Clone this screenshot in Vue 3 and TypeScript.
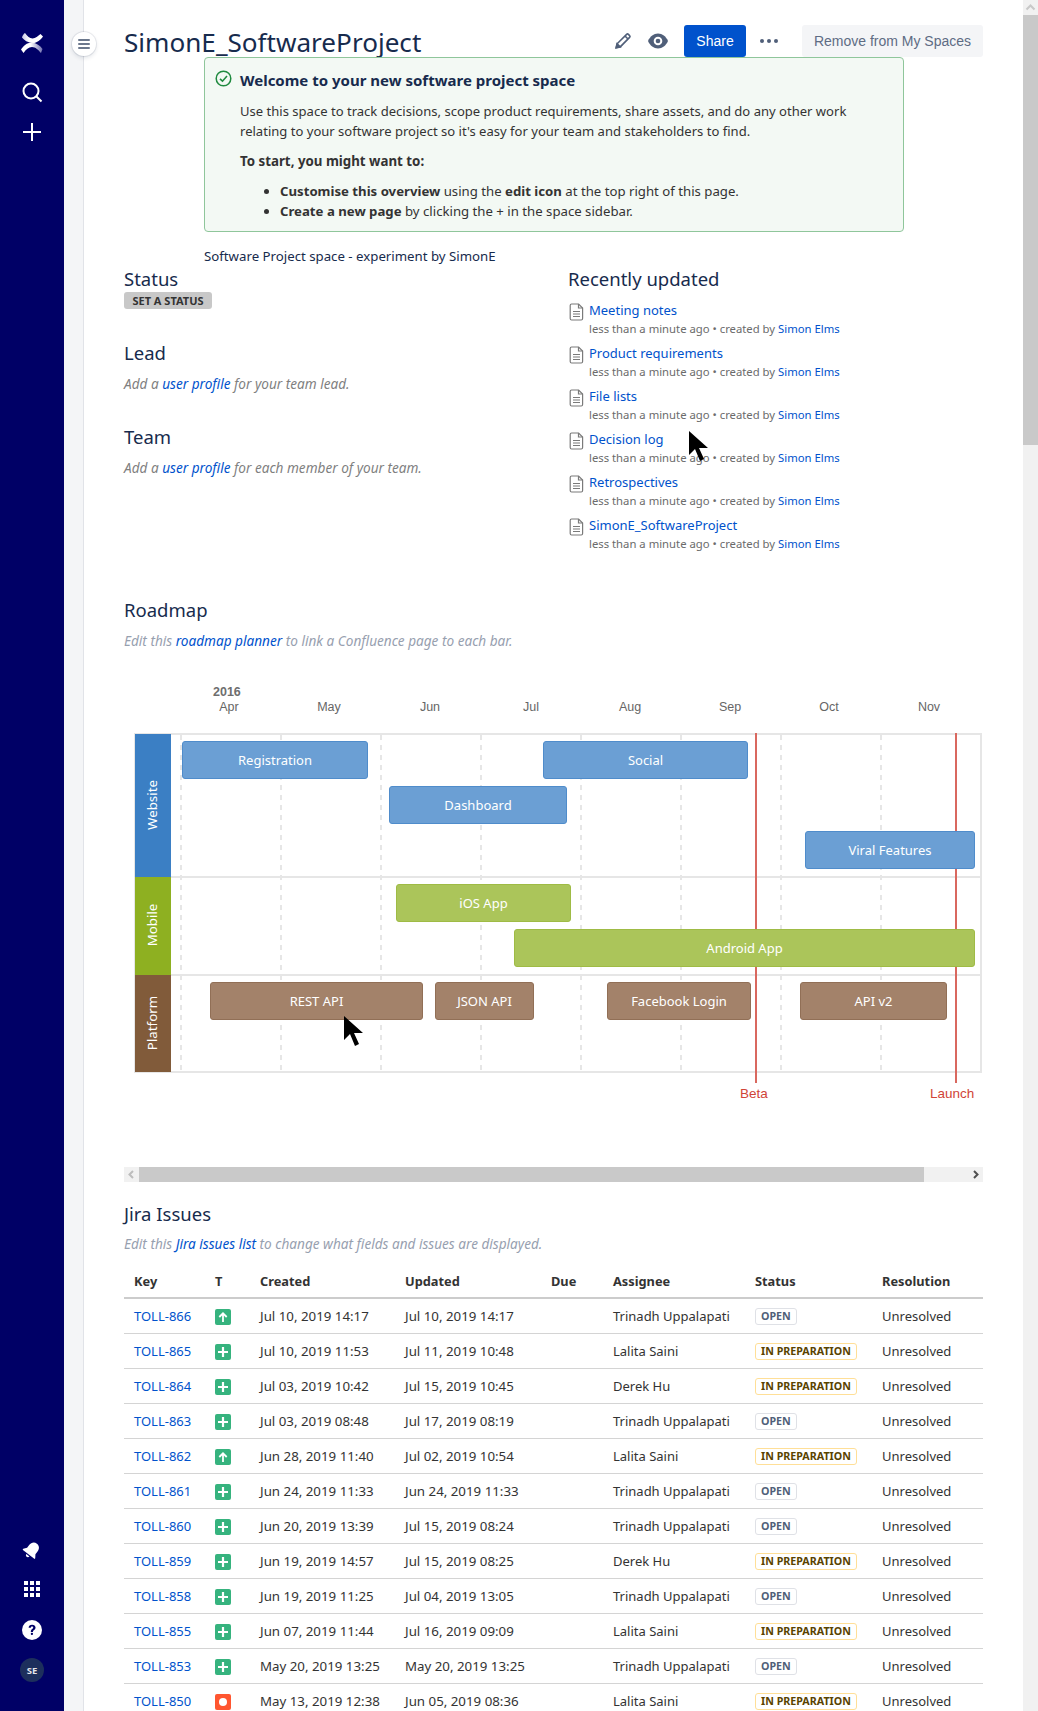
<script setup lang="ts">
interface Bar { label: string; x: number; y: number; w: number; h: number; kind: string }
interface Issue { key: string; type: string; created: string; updated: string; who: string; status: string }

const recent = ['Meeting notes', 'Product requirements', 'File lists', 'Decision log', 'Retrospectives', 'SimonE_SoftwareProject']
const months = [
  { name: 'Apr', x: 229 }, { name: 'May', x: 329 }, { name: 'Jun', x: 430 }, { name: 'Jul', x: 531 },
  { name: 'Aug', x: 630 }, { name: 'Sep', x: 730 }, { name: 'Oct', x: 829 }, { name: 'Nov', x: 929 },
]
const grid = [180, 280, 380, 480, 580, 680, 780, 880]
const bars: Bar[] = [
  { label: 'Registration', x: 182, y: 740, w: 186, h: 38, kind: 'blue' },
  { label: 'Social', x: 543, y: 740, w: 205, h: 38, kind: 'blue' },
  { label: 'Dashboard', x: 389, y: 785, w: 178, h: 38, kind: 'blue' },
  { label: 'Viral Features', x: 805, y: 830, w: 170, h: 38, kind: 'blue' },
  { label: 'iOS App', x: 396, y: 883, w: 175, h: 38, kind: 'green' },
  { label: 'Android App', x: 514, y: 928, w: 461, h: 38, kind: 'green' },
  { label: 'REST API', x: 210, y: 981, w: 213, h: 38, kind: 'brown' },
  { label: 'JSON API', x: 435, y: 981, w: 99, h: 38, kind: 'brown' },
  { label: 'Facebook Login', x: 607, y: 981, w: 144, h: 38, kind: 'brown' },
  { label: 'API v2', x: 800, y: 981, w: 147, h: 38, kind: 'brown' },
]
const px = (b: Bar) => ({ left: `${b.x - 124}px`, top: `${b.y - 670}px`, width: `${b.w}px`, height: `${b.h}px` })

const T = 'Trinadh Uppalapati', L = 'Lalita Saini', D = 'Derek Hu', O = 'OPEN', P = 'IN PREPARATION'
const issues: Issue[] = [
  { key: 'TOLL-866', type: 'up', created: 'Jul 10, 2019 14:17', updated: 'Jul 10, 2019 14:17', who: T, status: O },
  { key: 'TOLL-865', type: 'plus', created: 'Jul 10, 2019 11:53', updated: 'Jul 11, 2019 10:48', who: L, status: P },
  { key: 'TOLL-864', type: 'plus', created: 'Jul 03, 2019 10:42', updated: 'Jul 15, 2019 10:45', who: D, status: P },
  { key: 'TOLL-863', type: 'plus', created: 'Jul 03, 2019 08:48', updated: 'Jul 17, 2019 08:19', who: T, status: O },
  { key: 'TOLL-862', type: 'up', created: 'Jun 28, 2019 11:40', updated: 'Jul 02, 2019 10:54', who: L, status: P },
  { key: 'TOLL-861', type: 'plus', created: 'Jun 24, 2019 11:33', updated: 'Jun 24, 2019 11:33', who: T, status: O },
  { key: 'TOLL-860', type: 'plus', created: 'Jun 20, 2019 13:39', updated: 'Jul 15, 2019 08:24', who: T, status: O },
  { key: 'TOLL-859', type: 'plus', created: 'Jun 19, 2019 14:57', updated: 'Jul 15, 2019 08:25', who: D, status: P },
  { key: 'TOLL-858', type: 'plus', created: 'Jun 19, 2019 11:25', updated: 'Jul 04, 2019 13:05', who: T, status: O },
  { key: 'TOLL-855', type: 'plus', created: 'Jun 07, 2019 11:44', updated: 'Jul 16, 2019 09:09', who: L, status: P },
  { key: 'TOLL-853', type: 'plus', created: 'May 20, 2019 13:25', updated: 'May 20, 2019 13:25', who: T, status: O },
  { key: 'TOLL-850', type: 'bug', created: 'May 13, 2019 12:38', updated: 'Jun 05, 2019 08:36', who: L, status: P },
]
</script>

<template>
  <div class="page">
    <nav class="nav">
      <div class="nav-top">
        <svg class="logo" width="24" height="24" viewBox="0 0 24 24">
          <defs>
            <linearGradient id="lgt" x1="0" y1="0" x2="1" y2="0">
              <stop offset="0" stop-color="#c9c9e6" />
              <stop offset="0.35" stop-color="#fff" />
              <stop offset="1" stop-color="#fff" />
            </linearGradient>
            <linearGradient id="lgb" x1="0" y1="0" x2="1" y2="0">
              <stop offset="0" stop-color="#fff" />
              <stop offset="0.45" stop-color="#fff" />
              <stop offset="1" stop-color="#7070b0" />
            </linearGradient>
          </defs>
          <path d="M2 6.500 C2.500 4.500 3.500 3 5 2 C7.500 5 9.500 7.500 12.500 7.500 C15.500 7.500 18 5 20.500 3 L23 5.500 C20.500 9 16.500 12.500 12 12 C7.500 11.500 4.500 9.500 2 6.500Z" fill="url(#lgt)" />
          <path d="M1 18.500 C3.500 15 7.500 11 12 11.500 C16.500 12 20 14.500 22.500 18 L21 22 C18.500 19 15.500 16 12 16 C8.500 16 6 18.500 3.500 22 Z" fill="url(#lgb)" />
        </svg>
        <svg class="nico" width="24" height="24" viewBox="0 0 24 24" fill="none" stroke="#fff">
          <circle cx="11" cy="11" r="7.500" stroke-width="2" />
          <path d="M16.500 16.500l5 5" stroke-width="2" />
        </svg>
        <svg class="nico" width="24" height="24" viewBox="0 0 24 24" stroke="#fff" stroke-width="2">
          <path d="M12 3v18M3 12h18" />
        </svg>
      </div>
      <div class="nav-bottom">
        <svg class="bell" width="24" height="24" viewBox="0 0 24 24" fill="#fff">
          <g transform="rotate(38 12 12)">
            <path d="M12 4c-3.300 0-5.300 2.500-5.300 5.800v3.400L4.400 16.500v1h15.200v-1l-2.300-3.300V9.800C17.300 6.500 15.300 4 12 4z" />
            <path d="M10 18.700h4c-.2 1.300-1 2-2 2s-1.800-.7-2-2z" />
          </g>
        </svg>
        <span class="apps"><i v-for="n in 9" :key="n"></i></span>
        <svg class="help" width="20" height="20" viewBox="0 0 22 22">
          <circle cx="11" cy="11" r="11" fill="#fff" />
          <path d="M7.300 8.600c0-2.200 1.600-3.500 3.800-3.500 2.200 0 3.800 1.300 3.800 3.200 0 2.700-2.800 2.700-2.800 4.800h-2.400c0-3.200 2.600-3.200 2.600-4.800 0-.7-.5-1.100-1.200-1.100-.9 0-1.400.6-1.400 1.400z" fill="#006" />
          <rect x="9.700" y="13.900" width="2.400" height="2.600" rx="1" fill="#006" />
        </svg>
        <span class="avatar">SE</span>
      </div>
    </nav>

    <aside class="strip">
      <button class="strip-btn" type="button" aria-label="Menu">
        <svg width="12" height="10" viewBox="0 0 12 10" fill="#6b778c">
          <rect y="0" width="12" height="2" rx="1" /><rect y="4" width="12" height="2" rx="1" /><rect y="8" width="12" height="2" rx="1" />
        </svg>
      </button>
    </aside>

    <main class="main">
      <header class="head">
        <h1 class="title">SimonE_SoftwareProject</h1>
        <div class="tools">
          <svg width="18" height="18" viewBox="0 0 18 18" fill="none" stroke="#505f79" stroke-width="1.600">
            <path d="M2.200 15.800l.9-4L12.600 2.400c.5-.5 1.300-.5 1.800 0l1.200 1.200c.5.5.5 1.300 0 1.800L6.200 14.900z" />
            <path d="M2.200 15.800l.9-4 3.100 3.100z" fill="#505f79" />
            <path d="M11 4l3 3" />
          </svg>
          <svg class="eye" width="20" height="16" viewBox="0 0 20 16">
            <path d="M0 8c2-4.600 5.800-7.500 10-7.500S18 3.400 20 8c-2 4.600-5.800 7.500-10 7.500S2 12.600 0 8z" fill="#505f79" />
            <circle cx="10" cy="8" r="4.300" fill="#fff" />
            <circle cx="10" cy="8" r="2.300" fill="#505f79" />
          </svg>
          <button class="share" type="button">Share</button>
          <span class="dots"><i></i><i></i><i></i></span>
          <button class="remove" type="button">Remove from My Spaces</button>
        </div>
      </header>

      <section class="panel">
        <svg class="ok" width="17" height="17" viewBox="0 0 17 17" fill="none">
          <circle cx="8.500" cy="8.500" r="7.300" stroke="#1f8a3f" stroke-width="1.500" />
          <path d="M5 8.800l2.500 2.400L12 6" stroke="#1f8a3f" stroke-width="1.600" />
        </svg>
        <h3 class="panel-title">Welcome to your new software project space</h3>
        <p class="panel-p">Use this space to track decisions, scope product requirements, share assets, and do any other work relating to your software project so it's easy for your team and stakeholders to find.</p>
        <p class="panel-p gap"><b>To start, you might want to:</b></p>
        <ul class="panel-ul">
          <li><b>Customise this overview</b> using the <b>edit icon</b> at the top right of this page.</li>
          <li><b>Create a new page</b> by clicking the + in the space sidebar.</li>
        </ul>
      </section>

      <p class="subtitle">Software Project space - experiment by SimonE</p>

      <div class="cols">
        <div class="col-left">
          <h2 class="h2">Status</h2>
          <span class="set-status">SET A STATUS</span>
          <h2 class="h2 lead">Lead</h2>
          <p class="note">Add a <a>user profile</a> for your team lead.</p>
          <h2 class="h2 team">Team</h2>
          <p class="note">Add a <a>user profile</a> for each member of your team.</p>
        </div>
        <div class="col-right">
          <h2 class="h2">Recently updated</h2>
          <ul class="recent">
            <li v-for="r in recent" :key="r">
              <svg width="16" height="18" viewBox="0 0 16 18" fill="none" stroke="#7a7a7a" stroke-width="1.200">
                <path d="M2.600 1h7l4 4v10.500c0 .8-.6 1.500-1.400 1.500H2.600c-.8 0-1.400-.7-1.400-1.500v-13c0-.8.6-1.500 1.400-1.500z" />
                <path d="M9.500 1v4h4M4 8.500h7M4 11h7M4 13.500h7" />
              </svg>
              <div>
                <a class="r-link">{{ r }}</a>
                <div class="r-meta">less than a minute ago • created by <a>Simon Elms</a></div>
              </div>
            </li>
          </ul>
        </div>
      </div>

      <h2 class="h2 roadmap">Roadmap</h2>
      <p class="note faint note-road">Edit this <a>roadmap planner</a> to link a Confluence page to each bar.</p>

      <div class="chart">
        <span class="year">2016</span>
        <span v-for="m in months" :key="m.name" class="month" :style="{ left: `${m.x - 124}px` }">{{ m.name }}</span>
        <div class="frame"></div>
        <i v-for="g in grid" :key="g" class="gridline" :style="{ left: `${g - 124}px` }"></i>
        <i class="hline h1"></i><i class="hline h2l"></i>
        <div class="lane l1"><span>Website</span></div>
        <div class="lane l2"><span>Mobile</span></div>
        <div class="lane l3"><span>Platform</span></div>
        <i class="marker m1"></i><i class="marker m2"></i>
        <div v-for="b in bars" :key="b.label" class="bar" :class="b.kind" :style="px(b)">{{ b.label }}</div>
        <span class="mlabel b1">Beta</span>
        <span class="mlabel b2">Launch</span>
      </div>

      <div class="hscroll">
        <svg class="arrow" width="15" height="15" viewBox="0 0 15 15" fill="none" stroke="#bdbdbd" stroke-width="2"><path d="M9 4l-3.500 3.500L9 11" /></svg>
        <span class="thumb"></span>
        <svg class="arrow end" width="15" height="15" viewBox="0 0 15 15" fill="none" stroke="#505050" stroke-width="2"><path d="M6 4l3.500 3.500L6 11" /></svg>
      </div>

      <h2 class="h2 jira">Jira Issues</h2>
      <p class="note faint note-jira">Edit this <a>Jira issues list</a> to change what fields and issues are displayed.</p>

      <table class="issues">
        <colgroup>
          <col class="c-key" /><col class="c-t" /><col class="c-date" /><col class="c-date2" />
          <col class="c-due" /><col class="c-who" /><col class="c-status" /><col class="c-res" />
        </colgroup>
        <thead>
          <tr><th>Key</th><th>T</th><th>Created</th><th>Updated</th><th>Due</th><th>Assignee</th><th>Status</th><th>Resolution</th></tr>
        </thead>
        <tbody>
          <tr v-for="i in issues" :key="i.key">
            <td><a>{{ i.key }}</a></td>
            <td>
              <span class="type" :class="i.type">
                <svg v-if="i.type === 'plus'" width="10" height="10" viewBox="0 0 10 10" stroke="#fff" stroke-width="2.200"><path d="M5 0v10M0 5h10" /></svg>
                <svg v-else-if="i.type === 'up'" width="10" height="10" viewBox="0 0 10 10" fill="none" stroke="#fff" stroke-width="1.800"><path d="M5 10V1.500M1.300 5L5 1.300 8.700 5" /></svg>
                <i v-else class="dot"></i>
              </span>
            </td>
            <td class="date">{{ i.created }}</td>
            <td class="date">{{ i.updated }}</td>
            <td></td>
            <td>{{ i.who }}</td>
            <td><span class="loz" :class="{ prep: i.status === 'IN PREPARATION' }">{{ i.status }}</span></td>
            <td>Unresolved</td>
          </tr>
        </tbody>
      </table>
    </main>

    <div class="vscroll">
      <svg width="15" height="15" viewBox="0 0 15 15" fill="none" stroke="#c8c8c8" stroke-width="2"><path d="M3.500 9.500l4-4 4 4" /></svg>
      <span class="vthumb"></span>
    </div>

    <svg class="cursor c1" width="22" height="34" viewBox="0 0 22 34"><path d="M1 1v24l6-6 5 12 4-2-5-11h9z" fill="#000" /></svg>
    <svg class="cursor c2" width="22" height="34" viewBox="0 0 22 34"><path d="M1 1v24l6-6 5 12 4-2-5-11h9z" fill="#000" /></svg>
  </div>
</template>

<style>
html, body { margin: 0; background: #fff; }
</style>

<style scoped>
* { box-sizing: border-box; }
.page {
  position: relative; display: flex; width: 1038px; height: 1711px; overflow: hidden;
  font-family: "Noto Sans", sans-serif; color: #172b4d; background: #fff; font-size: 13px;
}
a { color: #0052cc; text-decoration: none; }
.nav {
  width: 64px; flex: none; background: #000066; display: flex; flex-direction: column;
  justify-content: space-between; align-items: center; padding: 31px 0 29px;
}
.nav-top { display: flex; flex-direction: column; align-items: center; }
.logo { margin-bottom: 25px; }
.nico { margin-bottom: 16px; }
.nav-bottom { display: flex; flex-direction: column; align-items: center; }
.bell { margin-bottom: 19px; }
.apps { display: grid; grid-template-columns: repeat(3, 4px); gap: 2px; margin-bottom: 23px; }
.apps i { width: 4px; height: 4px; background: #fff; }
.help { margin-bottom: 18px; }
.avatar {
  width: 24px; height: 24px; border-radius: 50%; background: #1d2f5c; color: #e4e6ea;
  font-size: 9.500px; font-weight: 700; display: flex; align-items: center; justify-content: center;
}
.strip { width: 20px; flex: none; background: #f4f5f7; border-right: 1px solid #e1e3e8; position: relative; }
.strip-btn {
  position: absolute; left: 8px; top: 32px; width: 24px; height: 24px; border-radius: 50%;
  background: #fff; border: 0; padding: 0; box-shadow: 0 0 0 1px rgba(9,30,66,.08), 0 2px 4px rgba(9,30,66,.12);
  display: flex; align-items: center; justify-content: center;
}
.main { flex: none; width: 899px; padding: 25px 0 0 40px; }
.head { display: flex; justify-content: space-between; align-items: center; height: 32px; }
.title { margin: 2px 0 0; font-size: 26.100px; font-weight: 400; line-height: 32px; color: #172b4d; white-space: nowrap; }
.tools { display: flex; align-items: center; }
.eye { margin-left: 16px; }
.share {
  margin-left: 16px; width: 62px; height: 32px; background: #0052cc; color: #fff; border: 0; border-radius: 3px;
  font-family: "Liberation Sans", sans-serif; font-size: 14px; padding: 0;
}
.dots { display: flex; gap: 3px; margin-left: 14px; margin-right: 24px; }
.dots i { width: 4px; height: 4px; border-radius: 50%; background: #505f79; }
.remove {
  width: 181px; height: 32px; background: #f4f5f7; color: #5e6c84; border: 0; border-radius: 3px;
  font-family: "Liberation Sans", sans-serif; font-size: 14px; padding: 0;
}
.panel {
  position: relative; width: 700px; height: 175px; margin-left: 80px; background: #f3f9f4;
  border: 1px solid #8fc69b; border-radius: 4px; padding: 12px 35px 0 35px; color: #333;
}
.ok { position: absolute; left: 10px; top: 12px; }
.panel-title { margin: 0; font-size: 15px; font-weight: 700; line-height: 20px; color: #172b4d; }
.panel-p { margin: 11px 0 0; font-size: 13.050px; line-height: 20px; }
.panel-p b { font-size: 13.300px; }
.panel-p.gap { margin-top: 10px; }
.panel-ul { margin: 10px 0 0; padding-left: 40px; font-size: 13.200px; line-height: 20px; }
.subtitle { margin: 15px 0 0 80px; font-size: 13.240px; line-height: 18px; color: #172b4d; }
.cols { display: flex; margin-top: 1px; }
.col-left { width: 444px; }
.h2 { margin: 0; font-size: 18.500px; font-weight: 400; line-height: 26px; color: #172b4d; }
.set-status {
  display: block; width: 88px; height: 17px; background: #c8c8c8; border-radius: 3px; color: #333;
  font-size: 11px; font-weight: 700; line-height: 17px; text-align: center;
}
.lead { margin-top: 31px; }
.team { margin-top: 31px; }
.note { margin: 9px 0 0; font-size: 13.600px; line-height: 18px; font-style: italic; color: #7f7f7f; }
.note.faint { color: #97a0af; }
.recent { list-style: none; margin: 8px 0 0; padding: 0; }
.recent li { display: flex; gap: 4px; height: 43px; }
.recent svg { flex: none; margin: 3px 0 0 1px; }
.r-link { font-size: 13px; line-height: 20px; display: block; color: #0052cc; }
.r-meta { font-size: 11.300px; line-height: 16px; color: #6b6b6b; margin-top: 1px; white-space: nowrap; }
.roadmap { margin-top: 39px; }
.note-road { margin-top: 9px; }
.chart { position: relative; height: 496px; width: 859px; margin-top: 21px; }
.year { position: absolute; left: 89px; top: 14px; font: 700 12.500px "Liberation Sans", sans-serif; color: #6e6e6e; }
.month { position: absolute; top: 29px; transform: translateX(-50%); font: 12.500px "Liberation Sans", sans-serif; color: #666; }
.frame { position: absolute; left: 10px; top: 62px; width: 848px; height: 340px; border: 2px solid #e6e6e6; }
.gridline {
  position: absolute; top: 64px; height: 336px; width: 2px;
  background: repeating-linear-gradient(#e6e6e6 0 5px, transparent 5px 10px);
}
.hline { position: absolute; left: 10px; width: 848px; height: 2px; background: #e6e6e6; }
.h1 { top: 205px; }
.h2l { top: 303px; }
.lane { position: absolute; left: 11px; width: 36px; color: #fff; display: flex; align-items: center; justify-content: center; font-size: 13.300px; }
.lane span { transform: rotate(-90deg); white-space: nowrap; margin-right: 2px; margin-bottom: 2px; }
.l1 { top: 63px; height: 143px; background: #3b7fc4; }
.l2 { top: 206px; height: 98px; background: #8eb021; }
.l3 { top: 304px; height: 97px; background: #815b3a; }
.marker { position: absolute; top: 62px; width: 2px; height: 350px; background: #d9685f; }
.m1 { left: 631px; }
.m2 { left: 831px; }
.bar {
  position: absolute; display: flex; align-items: center; justify-content: center; border-radius: 3px;
  color: #fff; font-size: 13px; border: 1px solid;
}
.blue { background: #6b9fd4; border-color: #4f8ccb; }
.green { background: #abc55a; border-color: #9fbb45; }
.brown { background: #a3826a; border-color: #916f56; }
.mlabel { position: absolute; top: 415px; font: 13.500px "Liberation Sans", sans-serif; color: #d04437; }
.b1 { left: 616px; }
.b2 { left: 806px; }
.hscroll { display: flex; align-items: center; height: 15px; background: #f1f1f1; }
.arrow { flex: none; display: block; }
.arrow.end { margin-left: auto; }
.thumb { width: 785px; height: 15px; background: #c9c9c9; }
.jira { margin-top: 19px; }
.note-jira { margin-top: 8px; }
.issues { border-collapse: collapse; table-layout: fixed; width: 859px; margin-top: 11px; font-size: 13px; color: #333; }
.c-key { width: 81px; } .c-t { width: 45px; } .c-date { width: 145px; } .c-date2 { width: 146px; }
.c-due { width: 62px; } .c-who { width: 142px; } .c-status { width: 127px; } .c-res { width: 111px; }
.issues th { height: 34px; text-align: left; font-weight: 700; font-size: 12.800px; padding: 0 0 0 10px; color: #333; border-bottom: 2px solid #ccc; }
.issues td { height: 35px; padding: 0 0 0 10px; border-bottom: 1px solid #d4d4d4; white-space: nowrap; }
.issues td.date { font-size: 13.300px; }
.type { display: inline-flex; align-items: center; justify-content: center; width: 16px; height: 16px; border-radius: 2px; vertical-align: middle; }
.type.plus, .type.up { background: #36b37e; }
.type.bug { background: #ff5630; }
.dot { width: 8px; height: 8px; border-radius: 50%; background: #fff; }
.loz {
  display: inline-block; font-size: 10.700px; font-weight: 700; line-height: 15px; padding: 0 5px; border: 1px solid #dfe1e6;
  border-radius: 3px; color: #505f79; background: #fff; vertical-align: middle;
}
.loz.prep { border-color: #ffdf97; color: #594300; }
.vscroll { position: absolute; right: 0; top: 0; width: 15px; height: 100%; background: #f1f1f1; }
.vscroll svg { display: block; }
.vthumb { display: block; width: 15px; height: 430px; background: #c9c9c9; }
.cursor { position: absolute; }
.c1 { left: 688px; top: 430px; }
.c2 { left: 343px; top: 1015px; }
</style>
